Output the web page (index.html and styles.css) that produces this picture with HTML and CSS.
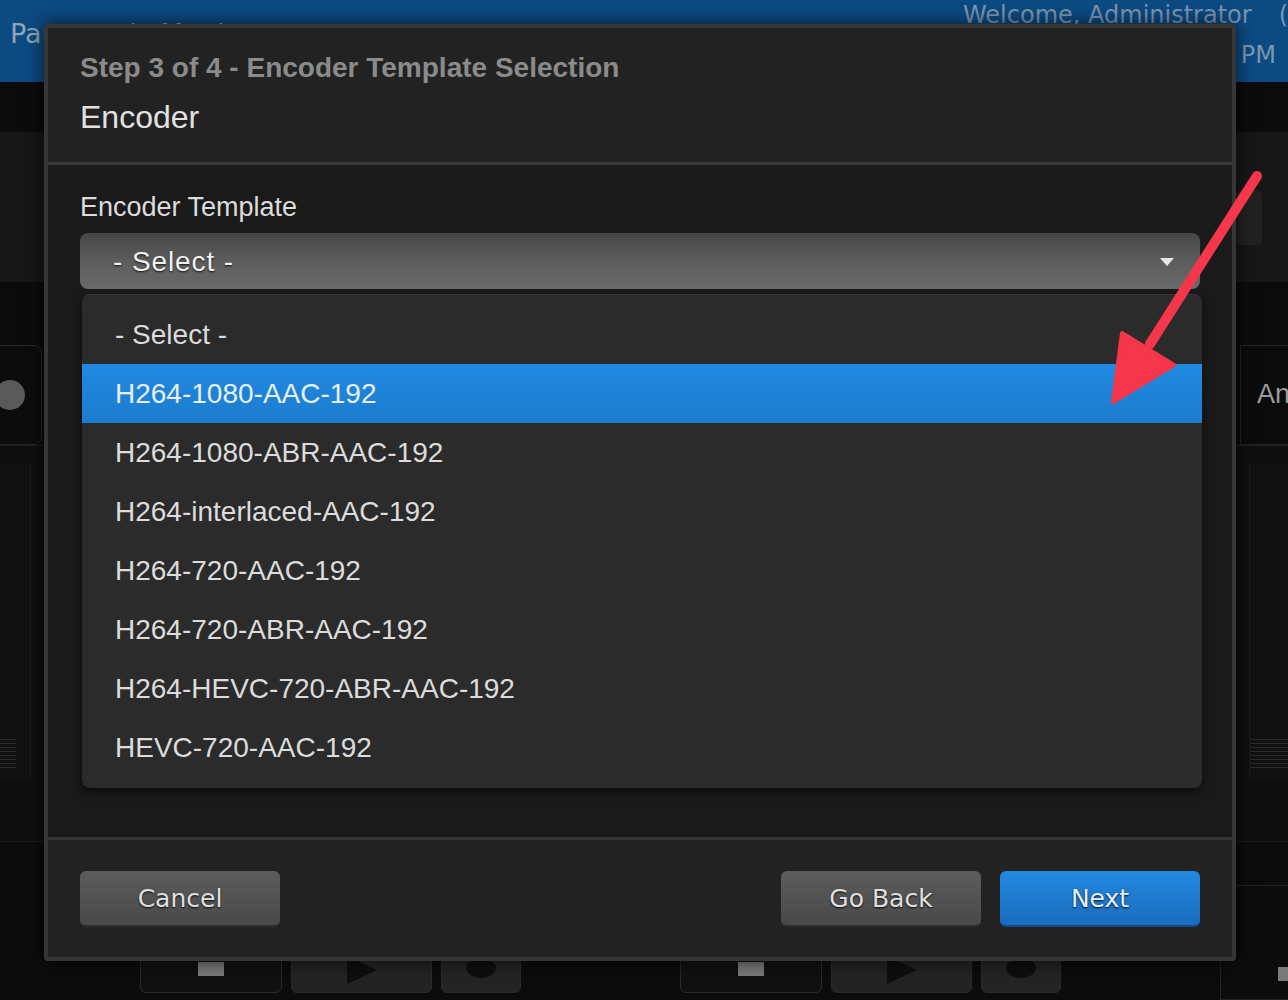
FILE: index.html
```html
<!DOCTYPE html>
<html lang="en">
  <head>
    <meta charset="UTF-8" />
    <meta name="viewport" content="width=device-width, initial-scale=1.0" />
    <title>Add Channel - Step 3 of 4</title>
    <link rel="stylesheet" href="styles.css">
  </head>
  <body>
    <div class="app">
      <header class="topbar">
        <div class="brand">Panoramic Monitor</div>
        <div class="session">
          <div class="welcome">Welcome, Administrator<span class="logout">(Logout)</span></div>
          <div class="clock">Thu 12/14/2023 4:32 PM</div>
        </div>
      </header>
      <div class="subbar"></div>

      <div class="strip strip-tools"><span class="tool-btn"></span></div>
      <div class="strip strip-gap"></div>

      <div class="strip strip-sources">
        <div class="source-card"><span class="source-dot"></span></div>
        <div class="source-name">Analog</div>
      </div>

      <div class="strip strip-meters">
        <div class="meter meter-left"><span class="meter-scale"></span></div>
        <div class="meter meter-right"><span class="meter-scale"></span></div>
      </div>

      <div class="strip strip-deck">
        <div class="deck-group">
          <span class="deck-btn deck-stop"><i class="stop"></i></span>
          <span class="deck-btn deck-play"><i class="play"></i></span>
          <span class="deck-btn deck-rec"><i class="rec"></i></span>
        </div>
        <div class="deck-group">
          <span class="deck-btn deck-stop"><i class="stop"></i></span>
          <span class="deck-btn deck-play"><i class="play"></i></span>
          <span class="deck-btn deck-rec"><i class="rec"></i></span>
        </div>
        <div class="deck-side"><i class="stop"></i></div>
      </div>
    </div>

    <div class="modal">
      <div class="modal-header">
        <div class="modal-step">Step 3 of 4 - Encoder Template Selection</div>
        <div class="modal-title">Encoder</div>
      </div>

      <div class="modal-body">
        <label class="field-label" for="template">Encoder Template</label>
        <div class="select" id="template">- Select -</div>
        <ul class="select-menu">
          <li>- Select -</li>
          <li class="active">H264-1080-AAC-192</li>
          <li>H264-1080-ABR-AAC-192</li>
          <li>H264-interlaced-AAC-192</li>
          <li>H264-720-AAC-192</li>
          <li>H264-720-ABR-AAC-192</li>
          <li>H264-HEVC-720-ABR-AAC-192</li>
          <li>HEVC-720-AAC-192</li>
        </ul>
      </div>

      <div class="modal-footer">
        <button class="btn">Cancel</button>
        <div class="footer-right">
          <button class="btn">Go Back</button>
          <button class="btn btn-primary">Next</button>
        </div>
      </div>
    </div>

    <svg class="pointer" width="1288" height="1000" viewBox="0 0 1288 1000">
      <line x1="1257" y1="176" x2="1150" y2="344" stroke="#f5364b" stroke-width="10" stroke-linecap="round" />
      <polygon points="1122,333 1174,365 1113,402" fill="#f5364b" stroke="#f5364b" stroke-width="4" stroke-linejoin="round" />
    </svg>
  </body>
</html>
```

FILE: styles.css
```css
body {
  margin: 0;
  background-color: #0a0a0a;
  font-family: "Liberation Sans", Arial, sans-serif;
  overflow: hidden;
}

/* ---- application behind the dialog ---- */

.app {
  width: 1288px;
  height: 1000px;
  display: flex;
  flex-direction: column;
  background-color: #0b0b0b;
  overflow: hidden;
}

.topbar {
  height: 82px;
  flex-shrink: 0;
  display: flex;
  justify-content: space-between;
  background-color: #0c4a82;
  font-family: "DejaVu Sans", sans-serif;
  white-space: nowrap;
}

.brand {
  padding: 18px 0 0 10px;
  font-size: 27px;
  line-height: 32px;
  color: #8fa5bb;
}

.session {
  width: 325px;
  flex-shrink: 0;
  font-size: 24px;
  line-height: 30px;
  color: #7b96b2;
  overflow: hidden;
}

.logout {
  margin-left: 27px;
}

.clock {
  margin-top: 10px;
  padding-right: 12px;
  text-align: right;
}

.subbar {
  height: 50px;
  flex-shrink: 0;
  background-color: #0b0b0b;
}

.strip {
  flex-shrink: 0;
  display: flex;
  justify-content: space-between;
}

.strip-tools {
  height: 150px;
  justify-content: flex-end;
  background-color: #171717;
}

.tool-btn {
  width: 26px;
  height: 55px;
  margin: 58px 26px 0 0;
  border-radius: 6px;
  background-color: #222;
}

.strip-gap {
  height: 63px;
  background-color: #0b0b0b;
}

.strip-sources {
  height: 100px;
  background-color: #0b0b0b;
}

.source-card {
  width: 42px;
  box-sizing: border-box;
  display: flex;
  align-items: center;
  border: 1px solid #262626;
  border-left: none;
  border-radius: 0 8px 8px 0;
  background-color: #0c0c0c;
}

.source-dot {
  width: 30px;
  height: 30px;
  margin-left: -5px;
  border-radius: 50%;
  background-color: #5a5a5a;
}

.source-name {
  width: 48px;
  box-sizing: border-box;
  padding-left: 16px;
  border: 1px solid #232323;
  border-right: none;
  font-size: 27px;
  line-height: 96px;
  color: #9a9a9a;
  overflow: hidden;
  white-space: nowrap;
}

.strip-meters {
  height: 395px;
  border-top: 1px solid #1f1f1f;
  background-color: #0e0e0e;
}

.meter {
  display: flex;
  flex-direction: column;
  justify-content: flex-end;
  margin: 17px 0 60px;
  padding-bottom: 10px;
  background-color: #111;
}

.meter-left {
  width: 30px;
  border-right: 1px solid #1c1c1c;
}

.meter-right {
  width: 38px;
  align-items: flex-end;
  border-left: 1px solid #1c1c1c;
}

.meter-scale {
  width: 16px;
  height: 32px;
  background: repeating-linear-gradient(#2c2c2c 0 1px, transparent 1px 4px);
}

.meter-right .meter-scale {
  width: 38px;
}

.strip-deck {
  flex: 1;
  justify-content: flex-start;
  align-items: flex-end;
  gap: 159px;
  padding: 0 0 7px 140px;
  border-top: 1px solid #1a1a1a;
  background-color: #0c0c0c;
}

.deck-group {
  display: flex;
  gap: 9px;
}

.deck-btn {
  height: 60px;
  box-sizing: border-box;
  display: flex;
  justify-content: center;
  border: 1px solid #2a2a2a;
  border-radius: 6px;
}

.deck-stop {
  width: 142px;
  background-color: #101010;
}

.deck-play {
  width: 141px;
  background-color: #232323;
}

.deck-rec {
  width: 80px;
  background-color: #242424;
}

.stop {
  width: 26px;
  height: 14px;
  margin-top: 28px;
  background-color: #7a7a7a;
}

.play {
  width: 0;
  height: 0;
  margin-top: 22px;
  border-top: 14px solid transparent;
  border-bottom: 14px solid transparent;
  border-left: 30px solid #0e0e0e;
}

.rec {
  width: 30px;
  height: 20px;
  margin-top: 24px;
  border-radius: 50%;
  background-color: #0e0e0e;
}

.deck-side {
  flex: 1;
  height: 113px;
  margin-bottom: -7px;
  padding-left: 57px;
  border: 1px solid #222;
  border-right: none;
  border-radius: 8px 0 0 0;
  background-color: #0c0c0c;
}

.deck-side .stop {
  display: block;
  margin-top: 81px;
}

/* ---- wizard dialog ---- */

.modal {
  position: absolute;
  left: 44px;
  top: 24px;
  width: 1192px;
  box-sizing: border-box;
  border: 4px solid #363636;
  border-radius: 4px;
  background-color: #222;
  box-shadow: 0 0 18px rgba(0, 0, 0, 0.7);
}

.modal-header {
  padding: 23px 32px 25px;
  border-bottom: 3px solid #383838;
}

.modal-step {
  font-size: 28px;
  line-height: 34px;
  font-weight: bold;
  color: #8b8b8b;
}

.modal-title {
  margin-top: 12px;
  font-size: 32px;
  line-height: 40px;
  color: #e2e2e2;
}

.modal-body {
  padding: 26px 32px 49px;
  background-color: #1a1a1a;
}

.field-label {
  display: block;
  margin-bottom: 10px;
  font-size: 27px;
  line-height: 32px;
  color: #dcdcdc;
}

.select {
  position: relative;
  height: 56px;
  padding-left: 33px;
  border-radius: 8px;
  background: linear-gradient(#464646, #5d5d5d 50%, #6a6a6a);
  font-size: 28px;
  line-height: 58px;
  letter-spacing: 0.9px;
  color: #f2f2f2;
  text-shadow: 0 1px 2px rgba(0, 0, 0, 0.8);
}

.select::after {
  content: "";
  position: absolute;
  right: 26px;
  top: 25px;
  border-left: 7px solid transparent;
  border-right: 7px solid transparent;
  border-top: 8px solid #e6e6e6;
}

.select-menu {
  list-style: none;
  margin: 5px -2px 0 2px;
  padding: 10px 0 11px;
  border-top: 1px solid #363636;
  border-radius: 8px;
  background-color: #2b2b2b;
  box-shadow: 0 4px 10px rgba(0, 0, 0, 0.6);
}

.select-menu li {
  padding-left: 33px;
  font-size: 28px;
  line-height: 59px;
  color: #dcdcdc;
}

.select-menu li.active {
  background: linear-gradient(#1f8ae2, #1c7ccd);
  color: #e8eef4;
}

.modal-footer {
  display: flex;
  justify-content: space-between;
  padding: 31px 32px 30px;
  border-top: 3px solid #353535;
}

.footer-right {
  display: flex;
  gap: 19px;
}

.btn {
  width: 200px;
  height: 56px;
  padding: 0;
  border: none;
  border-bottom: 2px solid #2e2e2e;
  border-radius: 6px;
  background: linear-gradient(#5c5c5c, #494949);
  font-family: "DejaVu Sans", sans-serif;
  font-size: 25px;
  color: #e0e0e0;
  text-shadow: 0 1px 2px rgba(0, 0, 0, 0.9);
}

.btn-primary {
  border-bottom-color: #0e4a86;
  background: linear-gradient(#2289e0, #1a6cbe);
  color: #e6eef6;
}

/* callout over the dialog */
.pointer {
  position: absolute;
  left: 0;
  top: 0;
  pointer-events: none;
}
```
